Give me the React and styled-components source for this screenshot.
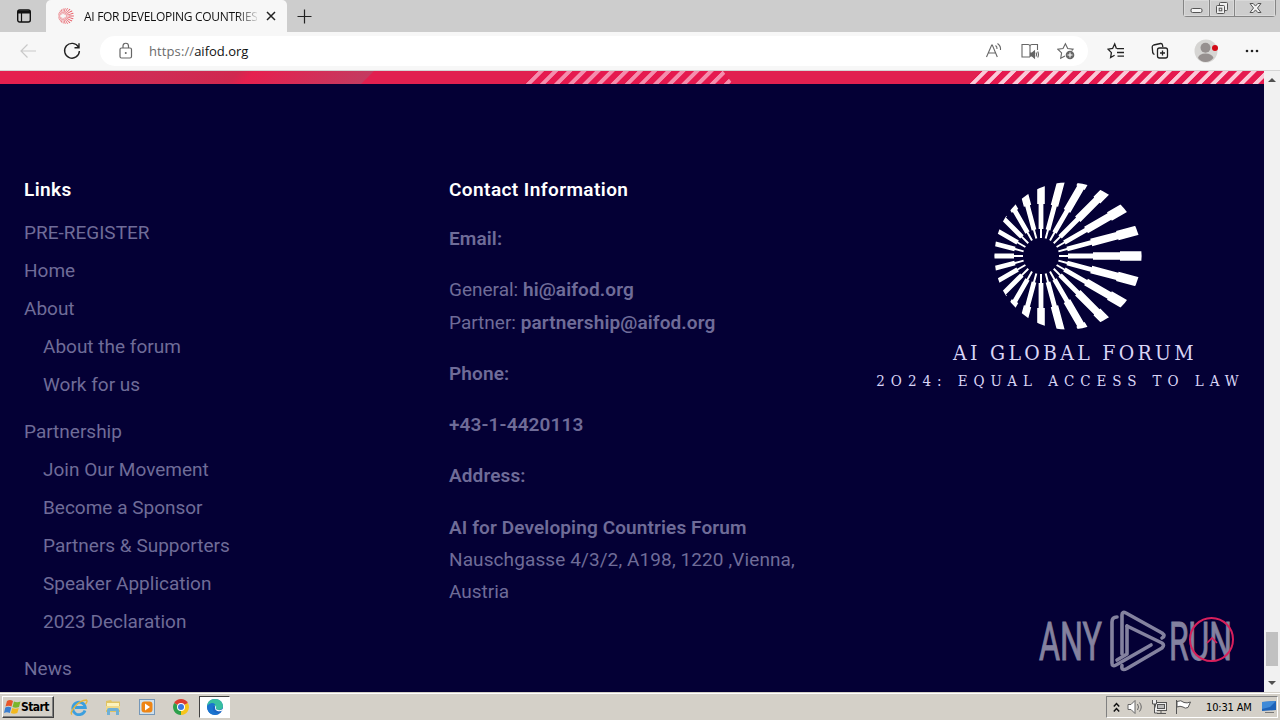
import React from "react";
import styled, { createGlobalStyle, css } from "styled-components";

const footerLinks = [
  { label: "PRE-REGISTER" },
  { label: "Home" },
  { label: "About", children: ["About the forum", "Work for us"] },
  {
    label: "Partnership",
    children: [
      "Join Our Movement",
      "Become a Sponsor",
      "Partners & Supporters",
      "Speaker Application",
      "2023 Declaration",
    ],
  },
  { label: "News" },
];

const rays = Array.from({ length: 24 }, (_, i) => i * 15);

function Sunburst({ size, color = "#fff" }) {
  return (
    <svg width={size} height={size} viewBox="0 0 148 148">
      <defs>
        <clipPath id={`disc${size}`}>
          <circle cx="74" cy="74" r="73.6" />
        </clipPath>
      </defs>
      <g clipPath={`url(#disc${size})`} fill={color}>
        {rays.map((deg) => (
          <path
            key={deg}
            transform={`translate(47 74) rotate(${deg})`}
            d="M18-1h9v-1.4h25v-1.4h27v-1h24v9.600h-24v-1h-27v-1.4h-25v-1.4h-9z"
          />
        ))}
      </g>
    </svg>
  );
}

function TabStrip() {
  return (
    <Strip>
      <TabActions>
        <svg width="16" height="16" viewBox="0 0 16 16" fill="none">
          <rect x="1.7" y="2" width="12.6" height="12" rx="2" stroke="#111" strokeWidth="1.4" />
          <path d="M2 2.5h12v3H2z" fill="#111" />
          <path d="M5.5 5v9" stroke="#111" strokeWidth="1.2" />
        </svg>
      </TabActions>
      <Tab>
        <Sunburst size={16} color="#e8636c" />
        <TabTitle>AI FOR DEVELOPING COUNTRIES</TabTitle>
        <svg width="10" height="10" viewBox="0 0 10 10">
          <path d="M1 1l8 8M9 1L1 9" stroke="#222" strokeWidth="1.5" />
        </svg>
      </Tab>
      <NewTab>
        <svg width="15" height="15" viewBox="0 0 15 15">
          <path d="M7.5 0.5v14M0.5 7.5h14" stroke="#222" strokeWidth="1.2" />
        </svg>
      </NewTab>
      <WindowButtons>
        <WindowButton $width={25}>
          <svg width="13" height="16" viewBox="0 0 13 16">
            <rect x="1" y="8.5" width="11" height="4" rx="1.5" fill="#f4f4f4" stroke="#555" />
          </svg>
        </WindowButton>
        <WindowButton $width={25}>
          <svg width="14" height="16" viewBox="0 0 14 16" fill="#f0f0f0" stroke="#555">
            <rect x="4.5" y="2.5" width="8" height="8" rx="1" />
            <rect x="1.5" y="5.5" width="8" height="8" rx="1" />
            <rect x="4.2" y="8.2" width="2.6" height="2.6" />
          </svg>
        </WindowButton>
        <WindowButton $width={41}>
          <svg width="13" height="16" viewBox="0 0 13 16">
            <path
              d="M1 3.5h3.2l2.3 2.6 2.3-2.6H12L8.5 8l3.5 4.5H8.8L6.5 9.9l-2.3 2.6H1L4.5 8z"
              fill="#f4f4f4"
              stroke="#555"
            />
          </svg>
        </WindowButton>
      </WindowButtons>
    </Strip>
  );
}

function Toolbar() {
  return (
    <Bar>
      <NavButton $width={56}>
        <svg width="18" height="18" viewBox="0 0 18 18" fill="none" stroke="#c9c9c9" strokeWidth="1.2">
          <path d="M17 9H2M8.5 2.5L2 9l6.5 6.5" />
        </svg>
      </NavButton>
      <NavButton $width={32}>
        <svg width="18" height="18" viewBox="0 0 18 18" fill="none" stroke="#222" strokeWidth="1.4">
          <path d="M15.5 5.2A7.400 7.400 0 1 0 16.400 9M16 1.200v4.500h-4.500" />
        </svg>
      </NavButton>
      <AddressBar>
        <svg width="14" height="18" viewBox="0 0 14 18" fill="none" stroke="#666" strokeWidth="1.2">
          <rect x="1" y="6" width="11.5" height="10" rx="1.5" />
          <path d="M4 6V4a2.75 2.75 0 0 1 5.5 0v2" />
          <circle cx="6.75" cy="11" r="1" fill="#666" stroke="none" />
        </svg>
        <Url>
          <span>https://</span>aifod.org
        </Url>
        <NavButton $width={36}>
          <svg width="18" height="18" viewBox="0 0 18 18" fill="none" stroke="#666" strokeWidth="1.1">
            <path d="M1.5 15L6.7 3h0.6l5 12M3.3 11h7.2M10.5 3.5q1.8 1.3 1.5 3.5M12.5 1.5q3.5 2.5 3 6.5" />
          </svg>
        </NavButton>
        <NavButton $width={36}>
          <svg width="18" height="18" viewBox="0 0 18 18" fill="none" stroke="#666" strokeWidth="1.1">
            <path d="M9 15H1V2.5h6q2 0 2 2 0-2 2-2h5.500V8M9 4.500V15" />
            <path d="M9.5 11h1.7l2.3-2v7l-2.3-2H9.500z" fill="#666" />
            <path d="M15 10.5q1 2 0 4M16.700 9.500q1.500 3 0 6" />
          </svg>
        </NavButton>
        <NavButton $width={36}>
          <svg width="18" height="18" viewBox="0 0 18 18" fill="none" stroke="#666" strokeWidth="1.1">
            <path d="M8 14l-4.3 2.2 0.9-5.3L0.8 7.2l5.2-0.7L8.400 1.700l2.300 4.800 5.300 0.700-1.300 1.300" />
            <circle cx="13" cy="13" r="4.3" fill="#666" stroke="none" />
            <path d="M13 10.5v5M10.5 13h5" stroke="#fff" />
          </svg>
        </NavButton>
      </AddressBar>
      <NavButton $width={44}>
        <svg width="18" height="18" viewBox="0 0 18 18" fill="none" stroke="#222" strokeWidth="1.3">
          <path d="M9.5 6.7L7.7 2 5.6 6.5l-4.5 0.7 3.3 3.4-0.8 5 4-2.3M10 6.700h7M10 10.500h7M10.500 14.200H17" />
        </svg>
      </NavButton>
      <NavButton $width={44}>
        <svg width="18" height="18" viewBox="0 0 18 18" fill="none" stroke="#222" strokeWidth="1.3">
          <path d="M3.5 12.5q-1.5-0.5-1.8-2L1.2 5q0-1.5 1.5-2L9.500 1.500q1.700-0.200 2 1.500l0.300 2" />
          <rect x="6.5" y="6" width="10" height="10" rx="2" />
          <path d="M11.5 8.5v5M9 11h5" />
        </svg>
      </NavButton>
      <NavButton $width={48}>
        <svg width="24" height="24" viewBox="0 0 24 24">
          <circle cx="12" cy="12" r="11.5" fill="#d6d5d3" />
          <circle cx="11.5" cy="8.7" r="5" fill="#96908f" />
          <path d="M4 19q1-4.5 7.5-4.5T19.5 19q-3.5 4-8 4T4 19z" fill="#96908f" />
          <circle cx="21" cy="9" r="3" fill="#d30a17" />
        </svg>
      </NavButton>
      <NavButton $width={44}>
        <svg width="14" height="4" viewBox="0 0 14 4" fill="#222">
          <circle cx="2" cy="2" r="1.3" />
          <circle cx="7" cy="2" r="1.3" />
          <circle cx="12" cy="2" r="1.3" />
        </svg>
      </NavButton>
    </Bar>
  );
}

function Watermark() {
  return (
    <WatermarkBox>
      <svg width="200" height="66" viewBox="0 0 200 66" fill="#84829f" stroke="#84829f">
        <text x="2" y="52" textLength="63" lengthAdjust="spacingAndGlyphs">
          ANY
        </text>
        <g fill="none" strokeWidth="3.600" strokeLinejoin="round" strokeLinecap="round">
          <path d="M80 9q-5 0-5 5V55q0 4 4 2l35-20" />
          <path d="M85 46V7q0-4 4-2l36 20q4 3 0 5" />
          <path d="M90 18l35 17q3 2 0 5L90 60.500q-6 3-5-3" />
          <path d="M90 18V46L80 52" />
        </g>
        <text x="132" y="52" textLength="63" lengthAdjust="spacingAndGlyphs">
          RUN
        </text>
      </svg>
    </WatermarkBox>
  );
}

function Footer() {
  return (
    <FooterArea>
      <LinksColumn>
        <Heading>Links</Heading>
        <LinkList>
          {footerLinks.map((link) => (
            <li key={link.label}>
              <FooterLink>{link.label}</FooterLink>
              {link.children && (
                <SubList>
                  {link.children.map((child) => (
                    <li key={child}>
                      <FooterLink>{child}</FooterLink>
                    </li>
                  ))}
                </SubList>
              )}
            </li>
          ))}
        </LinkList>
      </LinksColumn>
      <ContactColumn>
        <Heading>Contact Information</Heading>
        <ContactText>
          <p>
            <strong>Email:</strong>
          </p>
          <p>
            General: <strong>hi@aifod.org</strong>
            <br />
            Partner: <strong>partnership@aifod.org</strong>
          </p>
          <p>
            <strong>Phone:</strong>
          </p>
          <p>
            <strong>+43-1-4420113</strong>
          </p>
          <p>
            <strong>Address:</strong>
          </p>
          <p>
            <strong>AI for Developing Countries Forum</strong>
            <br />
            <Street>Nauschgasse 4/3/2, A198, 1220 ,Vienna,</Street>
            <br />
            Austria
          </p>
        </ContactText>
      </ContactColumn>
      <LogoColumn>
        <Sunburst size={148} />
        <LogoName>AI GLOBAL FORUM</LogoName>
        <LogoTagline>2O24: EQUAL ACCESS TO LAW</LogoTagline>
      </LogoColumn>
      <Watermark />
      <BackToTop>
        <svg width="12" height="8" viewBox="0 0 12 8">
          <path d="M1 7l5-5 5 5" fill="none" stroke="#d81f5c" strokeWidth="1.6" />
        </svg>
      </BackToTop>
    </FooterArea>
  );
}

function Taskbar() {
  return (
    <TaskbarBox>
      <StartButton>
        <svg width="17" height="16" viewBox="0 0 17 16">
          <path d="M3 2q3-2 6 0L7.5 7.5q-3-1.5-6 0z" fill="#e8562a" />
          <path d="M10 2.5q3 1.5 6.5 0L15 8q-3.5 1.5-6.5 0z" fill="#7ab52c" />
          <path d="M1.3 8.5q3-1.5 6 0L5.8 14q-3-1.5-5.8 0z" fill="#3a7ed0" />
          <path d="M8.3 9q3 1.5 6.5 0l-1.5 5q-3.5 1.5-6.5 0z" fill="#f2b81f" />
        </svg>
        Start
      </StartButton>
      <QuickLaunch>
        <LaunchItem>
          <svg width="18" height="18" viewBox="0 0 18 18" fill="none">
            <path d="M15 12.5A6.300 6.300 0 1 1 15.300 9.500H5" stroke="#3c9fde" strokeWidth="2.8" />
            <path d="M2 16.5Q-0.500 15 5 8.500T16.500 2Q18 3 15.500 6" stroke="#e5b53a" strokeWidth="1.3" />
          </svg>
        </LaunchItem>
        <LaunchItem>
          <svg width="18" height="18" viewBox="0 0 18 18">
            <path d="M2 3l5-1 1 1.5h8V14H2z" fill="#e0c362" />
            <path d="M3 5h12v4H3z" fill="#fbf2bd" />
            <path d="M2 8h14v4H2z" fill="#efd98a" />
            <path d="M3 17v-5q0-2 2-2h8q2 0 2 2v5h-3v-4H6v4z" fill="#6fb0d6" />
          </svg>
        </LaunchItem>
        <LaunchItem>
          <svg width="18" height="18" viewBox="0 0 18 18">
            <rect x="1.5" y="1.5" width="15" height="15" fill="#cfe0ec" stroke="#7597b8" />
            <rect x="3.5" y="3.5" width="11" height="11" rx="3" fill="#ee8515" />
            <path d="M7 5.5l5 3.5-5 3.5z" fill="#fff" />
          </svg>
        </LaunchItem>
        <LaunchItem>
          <svg width="18" height="18" viewBox="0 0 18 18">
            <path d="M9 9L2.100 5A8 8 0 0 1 15.900 5z" fill="#dd3d30" />
            <path d="M9 9L2.100 5A8 8 0 0 0 9 17z" fill="#2da04b" />
            <path d="M9 9L15.900 5A8 8 0 0 1 9 17z" fill="#f6c51b" />
            <circle cx="9" cy="9" r="4" fill="#fff" />
            <circle cx="9" cy="9" r="3" fill="#3b78e0" />
          </svg>
        </LaunchItem>
        <LaunchItem $active>
          <svg width="18" height="18" viewBox="0 0 18 18">
            <circle cx="9" cy="9" r="8" fill="#1a66c4" />
            <path d="M1 8Q2 1 9 1t8 7q0 4-5 4-3-0.5-2-2.5Q8 5 1 8z" fill="#38bfa0" />
            <path d="M1 8q4-5 8.5-1.5Q6 8 7 12q1 3 6 3.5-3 2-6 1Q1 15 1 8z" fill="#1a74cf" />
            <path d="M9.500 7.500Q8 12 11.500 13q3 1 5.500-1v-1q-2 1.500-5 1-3-1-2-2.500 0.500-1-0.500-2z" fill="#fff" />
          </svg>
        </LaunchItem>
      </QuickLaunch>
      <Tray>
        <svg width="7" height="11" viewBox="0 0 7 11" fill="none" stroke="#111" strokeWidth="1.5">
          <path d="M0.800 4.500l2.700-3 2.700 3M0.800 9.500l2.700-3 2.700 3" />
        </svg>
        <svg width="17" height="16" viewBox="0 0 17 16" fill="#fff" stroke="#666">
          <path d="M1 5.500h3l4-4v13l-4-4H1z" />
          <path d="M10.5 5q2 3 0 6M12.500 3.500q3.500 4.500 0 9" fill="none" />
        </svg>
        <svg width="17" height="16" viewBox="0 0 17 16" fill="#eee" stroke="#555">
          <rect x="4.5" y="3.5" width="11" height="8" />
          <rect x="6.5" y="5.5" width="7" height="4" fill="#bbb" />
          <path d="M6 14.500h9M10 12v2M1.500 1v4h4V1M3.500 5v9h3" />
        </svg>
        <svg width="17" height="16" viewBox="0 0 17 16" fill="#fff" stroke="#555">
          <path d="M1.5 1v14M2 2.500q4-2 7 1 3 1 6.500-0.500l-2.500 5.500q-3 1.500-5-0.500-3-1.500-6 0z" />
        </svg>
        <Clock>10:31 AM</Clock>
        <svg width="16" height="14" viewBox="0 0 16 14">
          <path d="M1 2l14-1v9L1 11z" fill="#1d62b8" />
          <path d="M1 2l14-1-6 6-8 2z" fill="#3f8ad8" />
          <path d="M4 12.500h9" stroke="#777" />
        </svg>
      </Tray>
    </TaskbarBox>
  );
}

function App() {
  return (
    <Desktop>
      <GlobalStyle />
      <TabStrip />
      <Toolbar />
      <Viewport>
        <Page>
          <Banner>
            <Shade />
            <Stripes $width={208} $color="#f58dad" />
            <Stripes $width={295} $color="#fbc9d8" $last />
          </Banner>
          <Footer />
        </Page>
        <Scrollbar>
          <svg width="8" height="4" viewBox="0 0 8 4">
            <path d="M0 4l4-4 4 4z" fill="#505050" />
          </svg>
          <Thumb />
          <svg width="8" height="4" viewBox="0 0 8 4">
            <path d="M0 0l4 4 4-4z" fill="#505050" />
          </svg>
        </Scrollbar>
      </Viewport>
      <Taskbar />
    </Desktop>
  );
}

const GlobalStyle = createGlobalStyle`
  * {
    box-sizing: border-box;
  }

  body {
    margin: 0;
    overflow: hidden;
    font-family: Roboto, "Liberation Sans", sans-serif;
  }

  svg {
    display: block;
    flex: none;
  }
`;

const Desktop = styled.div`
  width: 1280px;
  height: 720px;
  display: flex;
  flex-direction: column;
  overflow: hidden;
`;

const Strip = styled.div`
  height: 32px;
  display: flex;
  background: #cdcdcd;
`;

const TabActions = styled.div`
  width: 46px;
  display: flex;
  align-items: center;
  justify-content: center;
  padding-left: 2px;
`;

const Tab = styled.div`
  width: 241px;
  display: flex;
  align-items: center;
  padding: 0 11px 0 12px;
  gap: 9px;
  background: #f7f7f7;
  border-radius: 5px 5px 0 0;
`;

const TabTitle = styled.span`
  flex: 1;
  padding-left: 1px;
  overflow: hidden;
  white-space: nowrap;
  font: 12px "Open Sans", sans-serif;
  letter-spacing: -0.3px;
  color: #111;
  mask-image: linear-gradient(90deg, #000 88%, transparent 102%);
`;

const NewTab = styled.div`
  width: 35px;
  display: flex;
  align-items: center;
  justify-content: center;
`;

const WindowButtons = styled.div`
  display: flex;
  height: 17px;
  margin-left: auto;
  margin-right: 4px;
  border: 1px solid #858585;
  border-top: none;
  border-radius: 0 0 4px 4px;
`;

const WindowButton = styled.div`
  width: ${(props) => props.$width}px;
  display: flex;
  justify-content: center;
  box-shadow: inset 0 0 0 1px #d9d9d9;

  & + & {
    border-left: 1px solid #858585;
  }
`;

const Bar = styled.div`
  height: 39px;
  display: flex;
  align-items: center;
  background: #f7f7f7;
  border-bottom: 1px solid #d5d5d5;
`;

const NavButton = styled.div`
  width: ${(props) => props.$width}px;
  display: flex;
  align-items: center;
  justify-content: center;
`;

const AddressBar = styled.div`
  width: 988px;
  height: 30px;
  display: flex;
  align-items: center;
  margin: 0 6px 0 12px;
  padding: 0 4px 0 19px;
  background: #fff;
  border-radius: 15px;
`;

const Url = styled.div`
  flex: 1;
  padding-left: 16px;
  font: 13px "Open Sans", sans-serif;
  color: #111;

  span {
    color: #6b6b6b;
    letter-spacing: 0.1px;
  }
`;

const Viewport = styled.div`
  height: 621px;
  display: flex;
`;

const Page = styled.div`
  width: 1264px;
  display: flex;
  flex-direction: column;
  background: #040035;
`;

const Banner = styled.div`
  height: 13px;
  display: flex;
  background: #e12050;
`;

const Shade = styled.div`
  width: 374px;
  margin-right: 151px;
  background: linear-gradient(135deg, #e5204f 10%, #cf2c55 40%, #d0284f 62%, #e5204f 66%, #c23c61 98%);
  clip-path: polygon(0 0, 100% 0, 361px 100%, 0 100%);
`;

const Stripes = styled.div`
  width: ${(props) => props.$width}px;
  background: repeating-linear-gradient(
    135deg,
    ${(props) => props.$color} 0 3.2px,
    #e5194f 4px 9.2px,
    ${(props) => props.$color} 10px
  );
  clip-path: polygon(12px 0, calc(100% - 10px) 0, 100% 100%, 0 100%);

  ${(props) =>
    props.$last &&
    css`
      margin-left: auto;
      clip-path: polygon(12px 0, 100% 0, 100% 100%, 0 100%);
    `}
`;

const FooterArea = styled.div`
  position: relative;
  flex: 1;
  display: flex;
  padding: 96px 0 0 24px;
  overflow: hidden;
  color: #6f6c98;
  font-size: 19px;
  line-height: 32.3px;
`;

const LinksColumn = styled.div`
  width: 425px;
`;

const ContactColumn = styled.div`
  width: 425px;
`;

const Heading = styled.h4`
  margin: 0;
  font-size: 19px;
  font-weight: 600;
  line-height: 20px;
  letter-spacing: 0.43px;
  color: #fff;
`;

const LinkList = styled.ul`
  margin: 14px 0 0;
  padding: 0;
  list-style: none;
`;

const SubList = styled.ul`
  margin: 0;
  padding: 0 0 9.6px 19px;
  list-style: none;
`;

const FooterLink = styled.a`
  display: block;
  line-height: 37.9px;
`;

const ContactText = styled.div`
  padding-top: 23px;

  p {
    margin: 0 0 19px;
  }

  strong {
    font-weight: 600;
    letter-spacing: 0.12px;
  }
`;

const Street = styled.span`
  letter-spacing: 0.1px;
`;

const LogoColumn = styled.div`
  width: 388px;
  display: flex;
  flex-direction: column;
  align-items: center;
  padding-top: 2px;
  font-family: "DejaVu Serif Condensed", "DejaVu Serif", serif;
  color: #d9d5f6;
  white-space: nowrap;
`;

const LogoName = styled.div`
  margin-top: 11px;
  padding-left: 14px;
  font-size: 21px;
  line-height: 24px;
  letter-spacing: 3.3px;
`;

const LogoTagline = styled.div`
  margin-top: 5px;
  padding-right: 15px;
  font-size: 15px;
  line-height: 22px;
  letter-spacing: 5.95px;
`;

const WatermarkBox = styled.div`
  position: absolute;
  right: 27px;
  bottom: 18px;
  font-family: Roboto, sans-serif;
  font-size: 53px;
`;

const BackToTop = styled.div`
  position: absolute;
  right: 30px;
  bottom: 30px;
  width: 45px;
  height: 45px;
  display: flex;
  align-items: center;
  justify-content: center;
  border: 2px solid #d81f5c;
  border-radius: 50%;
`;

const Scrollbar = styled.div`
  width: 16px;
  display: flex;
  flex-direction: column;
  align-items: center;
  padding: 7px 0;
  background: #f1f1f1;
`;

const Thumb = styled.div`
  width: 12px;
  height: 34px;
  margin: auto 0 15px;
  background: #c1c1c1;
`;

const TaskbarBox = styled.div`
  height: 28px;
  display: flex;
  align-items: center;
  padding: 1px 2px 0;
  background: #d4d0c8;
  border-top: 1px solid #d4d0c8;
  box-shadow: inset 0 1px #fff;
  font-family: "DejaVu Sans Condensed", "DejaVu Sans", sans-serif;
  font-size: 11px;
  color: #000;
`;

const StartButton = styled.div`
  width: 52px;
  height: 22px;
  display: flex;
  align-items: center;
  padding-left: 1px;
  font-size: 12px;
  font-weight: 700;
  letter-spacing: -0.55px;
  border: 1px solid;
  border-color: #fff #404040 #404040 #fff;
  box-shadow: inset -1px -1px #808080;
`;

const QuickLaunch = styled.div`
  display: flex;
  margin-left: 8px;
`;

const LaunchItem = styled.div`
  width: 34px;
  height: 22px;
  display: flex;
  align-items: center;
  justify-content: center;

  ${(props) =>
    props.$active &&
    css`
      width: 31px;
      margin-left: 1px;
      background: #fff;
      border: 1px solid;
      border-color: #404040 #fff #fff #404040;
    `}
`;

const Tray = styled.div`
  width: 172px;
  height: 22px;
  display: flex;
  align-items: center;
  gap: 7px;
  margin-left: auto;
  padding-left: 6px;
  border: 1px solid;
  border-color: #808080 #fff #fff #808080;
`;

const Clock = styled.span`
  width: 48px;
  margin-left: 7px;
  letter-spacing: -0.15px;
  white-space: nowrap;
`;

export default App;
